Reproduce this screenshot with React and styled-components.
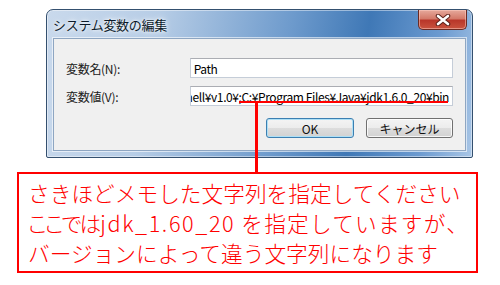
import styled, { createGlobalStyle } from "styled-components";

const GlobalStyle = createGlobalStyle`
    html, body {
        margin: 0;
        padding: 0;
        background: #ffffff;
    }
    body {
        font-family: "Noto Sans CJK JP", "Noto Sans", sans-serif;
    }
`;

const pathValue = "hell¥v1.0¥;C:¥Program Files¥Java¥jdk1.6.0_20¥bin";

const CloseGlyph = () => (
    <svg width="16" height="12" viewBox="0 0 16 12">
        <path
            d="M3 2 L13 10 M13 2 L3 10"
            stroke="#5a2019"
            strokeWidth="4.5"
            strokeLinecap="round"
        />
        <path
            d="M3 2 L13 10 M13 2 L3 10"
            stroke="#ffffff"
            strokeWidth="2.6"
            strokeLinecap="round"
        />
    </svg>
);

const App = () => {
    return (
        <Page>
            <GlobalStyle />
            <Window>
                <TitleBar>
                    <Title>システム変数の編集</Title>
                    <CloseButton>
                        <CloseGlyph />
                    </CloseButton>
                </TitleBar>
                <Body>
                    <Row>
                        <Label>変数名(N):</Label>
                        <Field>
                            <FieldText>Path</FieldText>
                        </Field>
                    </Row>
                    <Row>
                        <Label>変数値(V):</Label>
                        <Field $alignEnd>
                            <FieldText>{pathValue}</FieldText>
                        </Field>
                    </Row>
                    <Buttons>
                        <Button $primary>OK</Button>
                        <Button>キャンセル</Button>
                    </Buttons>
                </Body>
            </Window>
            <Callout>
                <p>さきほどメモした文字列を指定してください</p>
                <p>
                    <Tight>ここでは</Tight>
                    <Spaced $gap="1.6px">jdk_1.60_20</Spaced>
                    <Spaced $gap="1.2px"> を指定していますが、</Spaced>
                </p>
                <p>バージョンによって違う文字列になります</p>
            </Callout>
            <Underline />
            <Connector />
        </Page>
    );
};

export default App;

const Page = styled.div`
    position: relative;
    width: 500px;
    height: 285px;
    padding-top: 9px;
    box-sizing: border-box;
    overflow: hidden;
    background: #ffffff;
`;

const Window = styled.div`
    margin-left: 46px;
    width: 427px;
    height: 149px;
    box-sizing: border-box;
    display: flex;
    flex-direction: column;
    padding: 0 6px 6px 6px;
    border: 1px solid #34506f;
    border-radius: 7px 7px 2px 2px;
    background: linear-gradient(
        100deg,
        #c9d9ec 0%,
        #b7cde6 25%,
        #6d9acc 55%,
        #3f78b6 72%,
        #6b9ad0 88%,
        #a9c6e6 100%
    );
    box-shadow: inset 0 0 0 1px rgba(255, 255, 255, 0.45);
`;

const TitleBar = styled.div`
    height: 28px;
    display: flex;
    align-items: flex-start;
    justify-content: space-between;
`;

const Title = styled.div`
    margin-top: 7px;
    font-size: 13px;
    line-height: 16px;
    color: #0c1a2a;
    letter-spacing: -0.3px;
    text-shadow: 0 0 6px rgba(255, 255, 255, 0.95), 0 0 3px #ffffff;
`;

const CloseButton = styled.div`
    width: 49px;
    height: 20px;
    margin-right: -1px;
    box-sizing: border-box;
    display: flex;
    align-items: center;
    justify-content: center;
    border: 1px solid #6b2b24;
    border-top: none;
    border-radius: 0 0 5px 5px;
    background: linear-gradient(
        180deg,
        #e6a99c 0%,
        #d47a6a 45%,
        #b9372a 55%,
        #c9533f 100%
    );
    box-shadow: inset 0 0 0 1px rgba(255, 210, 200, 0.5);
`;

const Body = styled.div`
    flex: 1;
    box-sizing: border-box;
    background: #f0f0f0;
    border: 1px solid #8ea6c2;
    box-shadow: 0 0 0 1px rgba(255, 255, 255, 0.6);
    padding: 19px 12px 0 12px;
    display: flex;
    flex-direction: column;
    gap: 8px;
`;

const Row = styled.div`
    display: flex;
    align-items: center;
    height: 20px;
`;

const Label = styled.div`
    width: 124px;
    font-size: 12px;
    color: #1a1a1a;
    letter-spacing: -0.3px;
`;

const Field = styled.div`
    width: 264px;
    height: 20px;
    box-sizing: border-box;
    display: flex;
    align-items: center;
    justify-content: ${(p) => (p.$alignEnd ? "flex-end" : "flex-start")};
    overflow: hidden;
    padding: 0 3px;
    background: #ffffff;
    border: 1px solid #c5cdd8;
    border-top-color: #abadb3;
`;

const FieldText = styled.span`
    white-space: nowrap;
    font-size: 12px;
    color: #000000;
    letter-spacing: -0.4px;
`;

const Buttons = styled.div`
    display: flex;
    gap: 12px;
    margin-top: 4px;
    padding-left: 200px;
`;

const Button = styled.div`
    width: ${(p) => (p.$primary ? "88px" : "87px")};
    height: 20px;
    box-sizing: border-box;
    display: flex;
    align-items: center;
    justify-content: center;
    font-size: 12px;
    color: #111111;
    border-radius: 3px;
    border: 1px solid ${(p) => (p.$primary ? "#3c7fb1" : "#707070")};
    background: linear-gradient(
        180deg,
        #f4f4f4 0%,
        #ececec 50%,
        #dddddd 51%,
        #d2d2d2 100%
    );
    box-shadow: inset 0 0 0 1px
        ${(p) => (p.$primary ? "#aee0f6" : "rgba(255, 255, 255, 0.8)")};
`;

const Callout = styled.div`
    margin: 14px 0 0 17px;
    width: 461px;
    height: 101px;
    box-sizing: border-box;
    border: 2px solid #ff0000;
    padding: 4px 0 0 9px;
    color: #ff0000;
    font-size: 21.7px;
    font-weight: 300;
    line-height: 30px;

    p {
        margin: 0;
        white-space: nowrap;
    }
`;

const Tight = styled.span`
    font-feature-settings: "palt";
    letter-spacing: -2px;
    margin-right: 1px;
`;

const Spaced = styled.span`
    letter-spacing: ${(p) => p.$gap};
`;

const Underline = styled.div`
    position: absolute;
    left: 239px;
    top: 101px;
    width: 209px;
    height: 2px;
    background: #ff0000;
`;

const Connector = styled.div`
    position: absolute;
    left: 255px;
    top: 101px;
    width: 3px;
    height: 72px;
    background: #ff0000;
`;
